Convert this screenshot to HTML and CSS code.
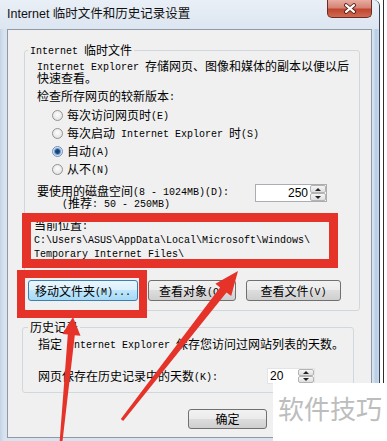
FILE: index.html
```html
<!DOCTYPE html>
<html lang="zh-CN">

<head>
    <meta charset="UTF-8">
    <meta name="viewport" content="width=device-width, initial-scale=1.0">
    <title>Internet 临时文件和历史记录设置</title>
    <link rel="stylesheet" href="styles.css">
</head>

<body>
    <div class="screen">
        <!-- Janela do diálogo -->
        <div class="window">
            <div class="titlebar">
                <span class="title">Internet 临时文件和历史记录设置</span>
                <button class="close" aria-label="关闭">
                    <svg width="14" height="11" viewBox="-7 -5.5 14 11">
                        <path d="M-4,-3.3 L4,3.3 M4,-3.3 L-4,3.3" stroke="#5a1d17" stroke-width="4" stroke-linecap="round" />
                        <path d="M-4,-3.3 L4,3.3 M4,-3.3 L-4,3.3" stroke="#fff" stroke-width="2.2" stroke-linecap="round" />
                    </svg>
                </button>
            </div>

            <div class="client">
                <fieldset class="group group-cache">
                    <legend><span class="m">Internet </span>临时文件</legend>
                    <p class="desc"><span class="m">Internet Explorer </span>存储网页、图像和媒体的副本以便以后<br>快速查看。</p>
                    <p class="label">检查所存网页的较新版本<span class="m">:</span></p>
                    <ul class="radios">
                        <li><span class="radio"></span><span class="txt">每次访问网页时<span class="m">(E)</span></span></li>
                        <li><span class="radio"></span><span class="txt">每次启动<span class="m"> Internet Explorer </span>时<span class="m">(S)</span></span></li>
                        <li><span class="radio on"></span><span class="txt">自动<span class="m">(A)</span></span></li>
                        <li><span class="radio"></span><span class="txt">从不<span class="m">(N)</span></span></li>
                    </ul>
                    <div class="disk">
                        <div class="disk-label">
                            <p>要使用的磁盘空间<span class="m">(8 - 1024MB)(D):</span></p>
                            <p class="hint"><span class="m">(</span>推荐<span class="m">: 50 - 250MB)</span></p>
                        </div>
                        <div class="spin">
                            <span class="spin-val">250</span>
                            <span class="spin-btns"><i class="up"></i><i class="down"></i></span>
                        </div>
                    </div>
                    <div class="location">
                        <p>当前位置<span class="m">:</span></p>
                        <p><span class="m">C:\Users\ASUS\AppData\Local\Microsoft\Windows\</span></p>
                        <p><span class="m">Temporary Internet Files\</span></p>
                    </div>
                    <div class="btn-row">
                        <button class="btn btn-move focus">移动文件夹<span class="m">(M)...</span></button>
                        <button class="btn btn-objects">查看对象<span class="m">(O)</span></button>
                        <button class="btn btn-files">查看文件<span class="m">(V)</span></button>
                    </div>
                </fieldset>

                <fieldset class="group group-history">
                    <legend>历史记录</legend>
                    <p class="desc">指定<span class="m"> Internet Explorer </span>保存您访问过网站列表的天数。</p>
                    <div class="days">
                        <p class="days-label">网页保存在历史记录中的天数<span class="m">(K):</span></p>
                        <div class="spin spin-days">
                            <span class="spin-val">20</span>
                            <span class="spin-btns"><i class="up"></i><i class="down"></i></span>
                        </div>
                    </div>
                </fieldset>

                <div class="dialog-buttons">
                    <button class="btn">确定</button>
                </div>
            </div>
        </div>

        <!-- Janela atrás -->
        <div class="behind"></div>

        <!-- Anotações em vermelho -->
        <svg class="marks" width="387" height="441" viewBox="0 0 387 441">
            <rect x="26.5" y="217.5" width="307" height="46" fill="none" stroke="#e5332a" stroke-width="9" />
            <rect x="21" y="274" width="122" height="40" fill="none" stroke="#e5332a" stroke-width="8" />
            <polygon fill="#e5332a" points="73,317 80.5,335.8 74.8,335.2 62.4,442 59.6,442 67.8,334.6 62.3,334" />
            <polygon fill="#e5332a" points="238,271 231.2,296 226.5,292.4 123.2,421 120.8,419.1 220.1,287.4 215.4,283.8" />
        </svg>

        <div class="watermark">软件技巧</div>
    </div>
</body>

</html>
```

FILE: styles.css
```css
/* Reset */
* {
    margin: 0;
    padding: 0;
    box-sizing: border-box;
}

:root {
    --frame: #d3dfec;
    --client: #f0f0f0;
    --group-line: #d0d8de;
    --red: #e5332a;
}

body {
    font-family: "Noto Sans CJK SC", sans-serif;
    font-size: 12px;
    color: #000;
    background: #fff;
}

/* Latin text of the dialog font (half width) */
.m {
    font: 10px/0 "Liberation Mono", monospace;
    vertical-align: 1px;
}

.screen {
    position: relative;
    display: flex;
    width: 387px;
    height: 441px;
    overflow: hidden;
}

/* Window frame */
.window {
    width: 380px;
    height: 441px;
    padding: 0 7px 3px;
    display: flex;
    flex-direction: column;
    background: linear-gradient(to right, #c3d3e4 0, #d8e3ef 4px, #d8e3ef 373px, #b5cce6 376px, #c9dbee 379px);
    border-right: 1px solid #3a4656;
    border-top-right-radius: 6px;
}

.titlebar {
    height: 29px;
    display: flex;
    align-items: flex-start;
    margin: 0 -7px;
    padding: 0 7px;
    background: linear-gradient(#e9eff6, #dce6f1);
    border-top-right-radius: 6px;
}

.title {
    margin-top: 6px;
    font: 12.5px/16px "Liberation Sans", "Noto Sans CJK SC", sans-serif;
    color: #111;
}

.close {
    margin-left: auto;
    width: 45px;
    height: 18px;
    display: flex;
    align-items: center;
    justify-content: center;
    border: 1px solid #6b2a24;
    border-top: none;
    border-radius: 0 0 5px 5px;
    background: linear-gradient(#e8aca2, #d58474 45%, #c04630 55%, #cf6a52);
}

/* Dialog body */
.client {
    height: 409px;
    border: 1px solid #8f9aa6;
    background: var(--client);
}

.group {
    border: 1px solid var(--group-line);
    border-radius: 3px;
    line-height: 12px;
}

.group legend {
    padding: 0 2px;
    line-height: 12px;
}

.group-cache {
    margin: 14px 0 0 16px;
    width: 333px;
    height: 267px;
    padding: 0 10px 0 12px;
}

.group-cache legend {
    margin-left: -9px;
}

.desc {
    margin-top: 4px;
    white-space: nowrap;
}

.label {
    margin-top: 6px;
}

.radios {
    margin-top: 4px;
    list-style: none;
}

.radios li {
    height: 18px;
    display: flex;
    align-items: center;
    padding-left: 15px;
    white-space: nowrap;
}

.radio {
    width: 11px;
    height: 11px;
    margin-right: 4px;
    border: 1px solid #929292;
    border-radius: 50%;
    background: radial-gradient(circle at 50% 40%, #fdfdfd, #dcdcdc);
}

.radio.on {
    border-color: #6f8fb4;
    background: radial-gradient(circle, #163a68 0, #234d84 2px, #6e9bd0 3px, #cfe0f3 4px, #eef4fb 5px);
}

.disk {
    margin-top: 6px;
    display: flex;
}

.disk-label {
    width: 218px;
    padding-top: 1px;
    white-space: nowrap;
}

.hint {
    padding-left: 25px;
}

.spin {
    display: flex;
    width: 72px;
    height: 18px;
    border: 1px solid #abadb3;
    background: #fff;
}

.spin-val {
    flex: 1;
    padding-right: 2px;
    text-align: right;
    font: 12px/16px "Liberation Sans", sans-serif;
}

.spin-btns {
    width: 16px;
    display: flex;
    flex-direction: column;
}

.spin-btns i {
    flex: 1;
    display: flex;
    align-items: center;
    justify-content: center;
    border: 1px solid #b3b3b3;
    border-radius: 2px;
    background: linear-gradient(#f6f6f6, #dedede);
}

.spin-btns i::after {
    content: '';
    border-left: 3px solid transparent;
    border-right: 3px solid transparent;
}

.spin-btns .up::after {
    border-bottom: 3px solid #222;
}

.spin-btns .down::after {
    border-top: 3px solid #222;
}

.location {
    margin: 9px 0 0 -3px;
    line-height: 14px;
    white-space: nowrap;
}

.btn-row {
    margin: 20px 0 0 -9px;
    display: flex;
    gap: 10px;
}

.btn {
    height: 21px;
    font: inherit;
    line-height: 19px;
    color: #000;
    white-space: nowrap;
    border: 1px solid #707070;
    border-radius: 3px;
    background: linear-gradient(#f2f2f2, #ebebeb 50%, #dddddd 50%, #cfcfcf);
}

.btn.focus {
    border-color: #3c7fb1;
    background: linear-gradient(#eaf6fd, #d9f0fc 50%, #bee6fd 50%, #a7d9f5);
}

.btn-move {
    width: 110px;
}

.btn-objects {
    width: 88px;
}

.btn-files {
    width: 95px;
}

.group-history {
    margin: 10px 0 0 14px;
    width: 332px;
    height: 72px;
    padding: 0 8px 0 15px;
}

.group-history legend {
    margin-left: -10px;
}

.group-history .desc {
    margin-top: 5px;
}

.days {
    margin-top: 18px;
    height: 16px;
    display: flex;
    align-items: center;
}

.days-label {
    width: 229px;
    white-space: nowrap;
}

.spin-days {
    width: 48px;
    height: 16px;
    border-color: #e2e4e8;
}

.spin-days .spin-val {
    padding: 0 0 0 2px;
    text-align: left;
    line-height: 14px;
}

.dialog-buttons {
    margin: 16px 0 0 180px;
    display: flex;
}

.dialog-buttons .btn {
    width: 79px;
    height: 20px;
    line-height: 18px;
}

/* Window behind */
.behind {
    flex: 1;
    background: linear-gradient(to right, #fff 3px, #2e2e2e 3px, #2e2e2e 4px, #fff 4px);
}

/* Overlays */
.marks {
    position: absolute;
    top: 0;
    left: 0;
    pointer-events: none;
}

.watermark {
    position: absolute;
    left: 273px;
    top: 383px;
    width: 114px;
    height: 58px;
    padding: 12px 0 0 5px;
    background: #fff;
    color: #bdbdbd;
    font-size: 26px;
    line-height: 26px;
    white-space: nowrap;
}
```
